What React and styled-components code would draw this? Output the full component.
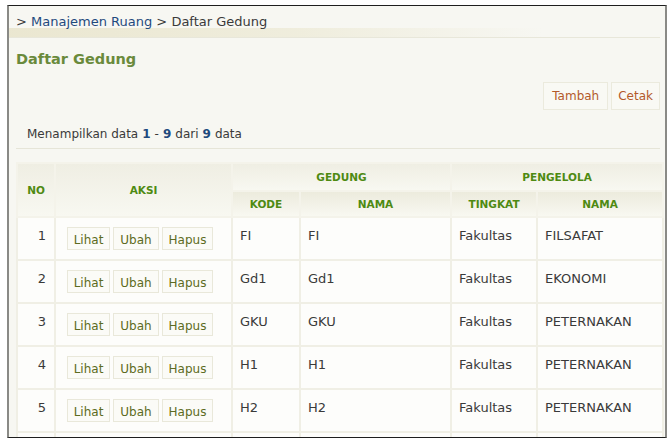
import React from "react";
import styled, { createGlobalStyle } from "styled-components";

const Global = createGlobalStyle`
  html, body { margin: 0; padding: 0; background: #ffffff; }
  body { font-family: "DejaVu Sans", Verdana, sans-serif; }
`;

const Frame = styled.div`
  margin: 5px 0 0 7px;
  height: 431px;
  border-top: 1px solid #1e1e1e;
  border-bottom: 1px solid #1e1e1e;
  border-left: 2px solid #8a8a86;
  border-right: 2px solid #8a8a86;
  background: #f7f7f2;
  overflow: hidden;
  display: flex;
  flex-direction: column;
  padding: 0 5px 0 7px;
  box-sizing: content-box;
  width: 644px;
`;

const Breadcrumb = styled.div`
  height: 31px;
  line-height: 31px;
  font-size: 13px;
  color: #3a3a3a;
  border-bottom: 1px solid #e8e7da;
  background:
    linear-gradient(to right, rgba(233, 229, 205, 0.9) 0%, rgba(236, 233, 212, 0.7) 45%, rgba(240, 238, 225, 0) 82%)
    bottom / 100% 9px no-repeat;
  margin-left: -7px;
  padding-left: 7px;
`;

const Crumb = styled.span`
  color: #1f4a7e;
`;

const Title = styled.h1`
  margin: 0;
  height: 40px;
  line-height: 42px;
  font-size: 14.5px;
  font-weight: bold;
  color: #6a8a3c;
`;

const Toolbar = styled.div`
  display: flex;
  justify-content: flex-end;
  gap: 3px;
  margin-top: 4px;
`;

const ToolButton = styled.span`
  display: inline-flex;
  align-items: center;
  justify-content: center;
  height: 26px;
  padding: 0 ${(p) => p.$pad}px;
  border: 1px solid #ebeadd;
  background: #f9f9f4;
  color: #b35a2b;
  font-size: 12px;
`;

const Info = styled.div`
  margin-top: 12px;
  padding: 0 0 2px 11px;
  line-height: 24px;
  font-size: 12px;
  color: #3a3a3a;
  border-bottom: 1px solid #e6e5d8;
`;

const Num = styled.b`
  color: #1f4a7e;
  margin: 0 4px;
`;

const Table = styled.table`
  margin-top: 13px;
  width: 646px;
  border-collapse: collapse;
  table-layout: fixed;
  font-size: 13px;
  color: #3a3a3a;
`;

const Th = styled.th`
  height: ${(p) => p.$h}px;
  padding: 0;
  font-size: 10.5px;
  font-weight: bold;
  color: #4e8a12;
  text-align: center;
  vertical-align: middle;
  border: 2px solid #f4f3ea;
  background: linear-gradient(to bottom, ${(p) => (p.$sub ? "#ecebdd" : "#efeee3")}, #f8f8f1);
`;

const Td = styled.td`
  height: 43px;
  box-sizing: border-box;
  padding: ${(p) => (p.$actions ? "9px 0 0 11px" : p.$num ? "10px 8px 0 0" : "10px 0 0 7px")};
  text-align: ${(p) => (p.$num ? "right" : "left")};
  vertical-align: top;
  background: #fdfdfb;
  border: 2px solid #f0efe5;
  white-space: nowrap;
  line-height: 16px;
`;

const Actions = styled.div`
  display: flex;
  gap: 3px;
`;

const ActButton = styled.span`
  display: inline-flex;
  align-items: center;
  justify-content: center;
  height: 23px;
  width: ${(p) => p.$w}px;
  box-sizing: border-box;
  border: 1px solid #e9e8da;
  background: #fbfbf7;
  color: #5d6b22;
  font-size: 12px;
  padding-top: 3px;
`;

const rows = [
  ["1", "FI", "FI", "Fakultas", "FILSAFAT"],
  ["2", "Gd1", "Gd1", "Fakultas", "EKONOMI"],
  ["3", "GKU", "GKU", "Fakultas", "PETERNAKAN"],
  ["4", "H1", "H1", "Fakultas", "PETERNAKAN"],
  ["5", "H2", "H2", "Fakultas", "PETERNAKAN"],
  ["6", "", "", "", ""],
];

export default function App() {
  return (
    <>
      <Global />
      <Frame>
        <Breadcrumb>
          &gt; <Crumb>Manajemen Ruang</Crumb> &gt; Daftar Gedung
        </Breadcrumb>
        <Title>Daftar Gedung</Title>
        <Toolbar>
          <ToolButton $pad={8}>Tambah</ToolButton>
          <ToolButton $pad={6}>Cetak</ToolButton>
        </Toolbar>
        <Info>
          Menampilkan data<Num>1</Num>-<Num>9</Num>dari<Num>9</Num>data
        </Info>
        <Table>
          <colgroup>
            <col style={{ width: 38 }} />
            <col style={{ width: 177 }} />
            <col style={{ width: 68 }} />
            <col style={{ width: 151 }} />
            <col style={{ width: 86 }} />
            <col style={{ width: 126 }} />
          </colgroup>
          <thead>
            <tr>
              <Th rowSpan={2} $h={26}>NO</Th>
              <Th rowSpan={2} $h={26}>AKSI</Th>
              <Th colSpan={2} $h={26}>GEDUNG</Th>
              <Th colSpan={2} $h={26}>PENGELOLA</Th>
            </tr>
            <tr>
              <Th $h={24} $sub>KODE</Th>
              <Th $h={24} $sub>NAMA</Th>
              <Th $h={24} $sub>TINGKAT</Th>
              <Th $h={24} $sub>NAMA</Th>
            </tr>
          </thead>
          <tbody>
            {rows.map((r) => (
              <tr key={r[0]}>
                <Td $num>{r[0] === "6" ? "" : r[0]}</Td>
                <Td $actions>
                  {r[0] !== "6" && (
                    <Actions>
                      <ActButton $w={43}>Lihat</ActButton>
                      <ActButton $w={46}>Ubah</ActButton>
                      <ActButton $w={51}>Hapus</ActButton>
                    </Actions>
                  )}
                </Td>
                <Td>{r[1]}</Td>
                <Td>{r[2]}</Td>
                <Td>{r[3]}</Td>
                <Td>{r[4]}</Td>
              </tr>
            ))}
          </tbody>
        </Table>
      </Frame>
    </>
  );
}
